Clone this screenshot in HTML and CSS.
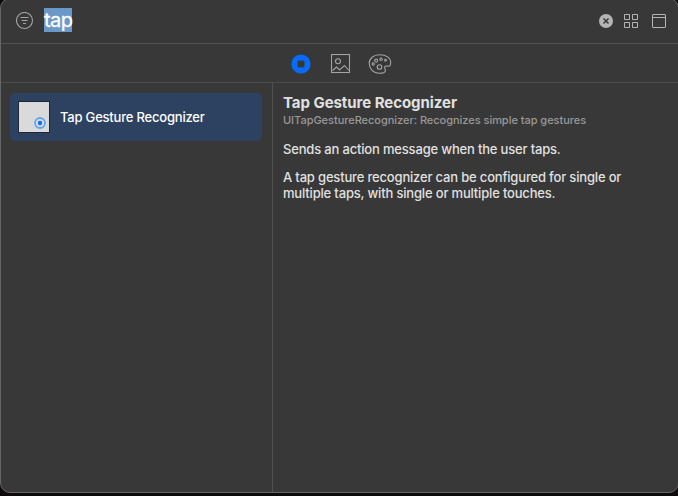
FILE: index.html
```html
<!DOCTYPE html>
<html lang="en">
<head>
<meta charset="utf-8">
<title>Library</title>
<link rel="stylesheet" href="styles.css">
</head>
<body>
<main class="library">
  <header class="search">
    <svg class="filter" width="18" height="18" viewBox="0 0 18 18"><circle cx="8.500" cy="8.500" r="8"/><path d="M4.500 5.500h8M5.500 8.500h6M7 11.500h3"/></svg>
    <span class="query"><span class="selected">tap</span></span>
    <svg class="clear" width="14" height="14" viewBox="0 0 14 14"><circle cx="7" cy="7" r="7"/><path d="M4.500 4.500l5 5M9.500 4.500l-5 5"/></svg>
    <svg class="tool grid" width="14" height="14" viewBox="0 0 14 14"><path d="M.5.5h5v5h-5zM8.500.5h5v5h-5zM.5 8.500h5v5h-5zM8.500 8.500h5v5h-5z"/></svg>
    <svg class="tool" width="14" height="14" viewBox="0 0 14 14"><rect x=".5" y=".5" width="13" height="13" rx=".5"/><path d="M.5 3.500h13"/></svg>
  </header>
  <nav class="tabs">
    <svg width="20" height="20" viewBox="0 0 20 20"><circle class="blue" cx="10" cy="10" r="9.600"/><rect class="hole" x="6.500" y="6.500" width="7" height="7" rx="1"/></svg>
    <svg class="line" width="20" height="20" viewBox="0 0 20 20"><rect x=".5" y=".5" width="18" height="18"/><circle cx="7" cy="7.200" r="2.500"/><path d="M1.500 16.500l4-3.500 3 3 5-4.500 4.500 5"/></svg>
    <svg class="line palette" width="24" height="20" viewBox="0 0 24 20"><path d="M11.500.8C5.500.8 1.200 4.500 1.200 9.300c0 5.500 4.300 9.900 10 9.900 3.100 0 6.200-1 6.200-2.800 0-1.500-1.100-2-.7-3.400.5-1.600 2-.8 3.700-.8 1.700 0 2.300-1.500 2.300-3.500C22.700 3.800 18.200.8 11.500.8z"/><circle cx="5.200" cy="10" r="1.100"/><circle cx="8.200" cy="6.600" r="1.500"/><circle cx="13" cy="5.300" r="1.200"/><circle cx="17.500" cy="6.200" r=".9"/><circle cx="11.500" cy="13" r="2.300"/></svg>
  </nav>
  <div class="content">
    <aside class="list">
      <div class="item">
        <span class="thumb"><svg width="12" height="12" viewBox="0 0 12 12"><circle class="ring" cx="6" cy="6" r="5"/><circle class="dot" cx="6" cy="6" r="2.200"/></svg></span>
        <span class="name">Tap Gesture Recognizer</span>
      </div>
    </aside>
    <article class="detail">
      <h1>Tap Gesture Recognizer</h1>
      <p class="class-name">UITapGestureRecognizer: Recognizes simple tap gestures</p>
      <p class="first">Sends an action message when the user taps.</p>
      <p class="second">A tap gesture recognizer can be configured for single or<br>multiple taps, with single or multiple touches.</p>
    </article>
  </div>
</main>
</body>
</html>
```
FILE: styles.css
```css
* { box-sizing: border-box; }
body { margin: 0; height: 496px; overflow: hidden; background: #0c0a0b; font-family: Inter, sans-serif; color: #e0e0e0; }
svg { display: block; flex: none; fill: none; }
p, h1 { margin: 0; white-space: nowrap; }
.library { display: flex; flex-direction: column; width: 679px; height: 495px; margin-top: -2px; border: 1px solid #656565; border-radius: 10px; background: #383838; overflow: hidden; }
.search { display: flex; align-items: center; height: 45px; padding: 0 12px 0 15px; border-bottom: 1px solid #525252; flex: none; }
.filter { stroke: #a3a3a3; stroke-width: 1.1; }
.query { flex: 1; margin: 0 0 2px 10px; font-size: 20px; line-height: 24px; letter-spacing: -.6px; color: #fff; }
.selected { display: inline-block; width: 28px; height: 24px; background: #6c98c8; vertical-align: top; -webkit-text-stroke: .3px #fff; }
.clear { fill: #b5b5b5; margin-right: 11px; }
.clear path { stroke: #383838; stroke-width: 1.5; }
.tool { stroke: #b5b5b5; }
.grid { margin-right: 14px; }
.tabs { display: flex; justify-content: center; align-items: center; gap: 20px; height: 39px; padding: 1px 0 0 3px; border-bottom: 1px solid #4c4c4c; flex: none; }
.blue { fill: #066cff; }
.hole { fill: #383838; }
.line { stroke: #a3a3a3; stroke-width: 1.1; }
.palette { margin-left: -3px; }
.content { display: flex; flex: 1; }
.list { width: 272px; border-right: 1px solid #505050; padding: 10px 10px 0 9px; }
.item { display: flex; align-items: center; height: 48px; padding-left: 8px; border-radius: 5px; background: #2d4261; }
.thumb { display: flex; align-items: flex-end; justify-content: flex-end; width: 32px; height: 32px; padding: 3px; border: 1px solid #1b2638; background: #dadada; }
.ring { stroke: #62a8ee; stroke-width: 1.8; }
.dot { fill: #0873f5; }
.name { margin-left: 10px; font-size: 13px; font-weight: 500; letter-spacing: -.2px; color: #fff; white-space: nowrap; }
.detail { flex: 1; padding: 10px 0 0 10px; font-size: 13px; line-height: 16px; font-weight: 500; letter-spacing: -.175px; }
h1 { font-size: 15px; line-height: 20px; font-weight: 700; letter-spacing: -.05px; }
.class-name { font-size: 11px; line-height: 14px; font-weight: 500; letter-spacing: -.03px; color: #999; }
.first { margin-top: 14px; }
.second { margin-top: 12px; }
```
